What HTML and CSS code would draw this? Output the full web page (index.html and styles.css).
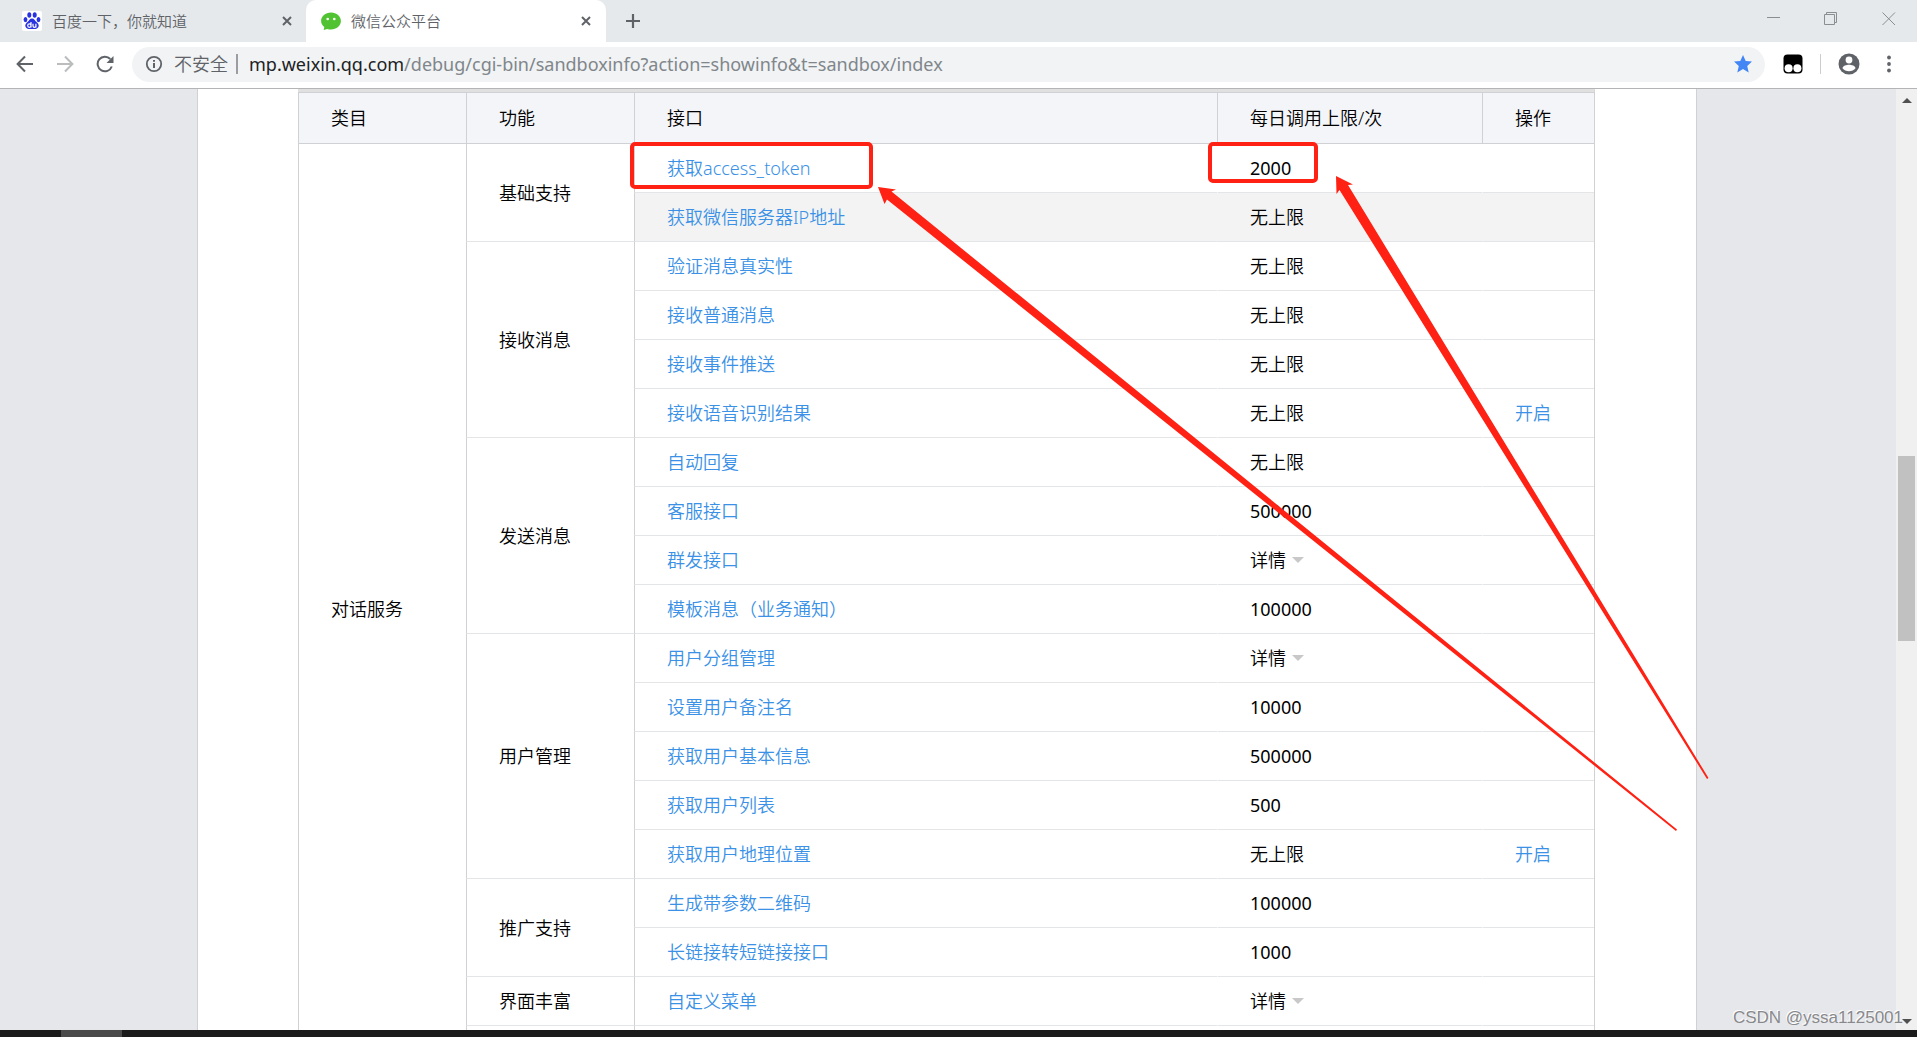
FILE: index.html
```html
<!DOCTYPE html>
<html lang="zh-CN">
<head>
<meta charset="utf-8">
<title>微信公众平台</title>
<link rel="stylesheet" href="styles.css">
</head>
<body>
<header class="tabs">
  <div class="tab">
    <svg class="favicon" viewBox="0 0 20 20"><rect width="20" height="20" rx="2" fill="#fff"/><g fill="#2932e1"><ellipse cx="7.3" cy="4" rx="2" ry="2.8"/><ellipse cx="12.7" cy="4" rx="2" ry="2.8"/><ellipse cx="3.5" cy="8.6" rx="1.9" ry="2.6"/><ellipse cx="16.5" cy="8.6" rx="1.9" ry="2.6"/><path d="M10 7.5c2.200 0 3 2.200 4.500 3.600 1.600 1.500 2.700 2.700 2 4.700-.8 2.200-2.800 2.400-6.500 2.200-3.700.2-5.700 0-6.500-2.200-.7-2 .4-3.200 2-4.700C7 9.700 7.800 7.500 10 7.500z"/></g><path d="M9 11v5.500M9 14.600c0-2.400-3.300-2.400-3.300 0s3.300 2.400 3.300 0M11 12.700v2.400c0 1.800 2.900 1.800 2.900 0v-2.400 3.800" fill="none" stroke="#fff" stroke-width="1.200"/></svg>
    <span class="tab-title">百度一下，你就知道</span>
    <button class="icon-button" aria-label="关闭标签页"><svg width="10" height="10" viewBox="0 0 10 10"><path d="M1 1l8 8M9 1l-8 8" stroke="#5f6368" stroke-width="2"/></svg></button>
  </div>
  <div class="tab tab-active">
    <svg class="favicon" viewBox="0 0 20 20"><path d="M10 1.500c5.600 0 9.900 3.700 9.900 8.500s-4.300 8.500-9.900 8.500c-1.400 0-2.600-.2-3.700-.6L2.700 19l.6-3C1.300 14.500.1 12.400.1 10 .1 5.200 4.400 1.500 10 1.500z" fill="#51c332"/><circle cx="6.700" cy="8" r="1.300" fill="#fff"/><circle cx="13.300" cy="8" r="1.300" fill="#fff"/></svg>
    <span class="tab-title">微信公众平台</span>
    <button class="icon-button" aria-label="关闭标签页"><svg width="10" height="10" viewBox="0 0 10 10"><path d="M1 1l8 8M9 1l-8 8" stroke="#5f6368" stroke-width="2"/></svg></button>
  </div>
  <button class="icon-button new-tab" aria-label="新标签页"><svg width="16" height="16" viewBox="0 0 16 16"><path d="M8 1v14M1 8h14" stroke="#5f6368" stroke-width="2.200"/></svg></button>
  <div class="window-controls">
    <button class="icon-button" aria-label="最小化"><svg width="14" height="14" viewBox="0 0 14 14"><path d="M1 5.500h13" stroke="#8b8e91"/></svg></button>
    <button class="icon-button" aria-label="还原"><svg width="14" height="14" viewBox="0 0 14 14"><path d="M.5 2.500h10v10H.5zM2.500 2.500v-2h10v10h-2" fill="none" stroke="#8b8e91"/></svg></button>
    <button class="icon-button" aria-label="关闭"><svg width="14" height="14" viewBox="0 0 14 14"><path d="M.5.500l12.500 12.500M13 .5L.5 13" stroke="#8b8e91"/></svg></button>
  </div>
</header>
<nav class="toolbar">
  <div class="nav-buttons">
    <button class="icon-button" aria-label="后退"><svg width="18" height="18" viewBox="0 0 18 18"><path d="M17 9H2M9 1.500L1.600 9 9 16.500" fill="none" stroke="#5f6368" stroke-width="2"/></svg></button>
    <button class="icon-button" aria-label="前进"><svg width="18" height="18" viewBox="0 0 18 18"><path d="M1 9h15M9 1.500L16.400 9 9 16.500" fill="none" stroke="#babcbe" stroke-width="2"/></svg></button>
    <button class="icon-button" aria-label="重新加载"><svg width="18" height="18" viewBox="0 0 18 18"><path d="M15.800 11.500A7.300 7.300 0 1 1 14.300 4" fill="none" stroke="#5f6368" stroke-width="2"/><path d="M17.500 1v7h-7z" fill="#5f6368"/></svg></button>
  </div>
  <div class="omnibox">
    <svg width="18" height="18" viewBox="0 0 18 18"><circle cx="9" cy="9" r="7.200" fill="none" stroke="#5f6368" stroke-width="1.800"/><path d="M9 8v5M9 5v1.800" stroke="#5f6368" stroke-width="2"/></svg>
    <span class="security">不安全</span>
    <span class="address"><b>mp.weixin.qq.com</b>/debug/cgi-bin/sandboxinfo?action=showinfo&amp;t=sandbox/index</span>
    <button class="icon-button" aria-label="书签"><svg width="18" height="18" viewBox="0 0 18 18"><path d="M9 0l2.700 6 6.300.6-4.800 4.300 1.500 6.600L9 14l-5.700 3.500 1.500-6.600L0 6.600 6.300 6z" fill="#4285f4"/></svg></button>
  </div>
  <div class="tools">
    <button class="icon-button" aria-label="扩展程序"><svg width="20" height="20" viewBox="0 0 20 20"><rect x=".5" y=".5" width="19" height="19" rx="4"/><circle cx="5.600" cy="14.300" r="4" fill="#fff"/><circle cx="14.400" cy="14.300" r="4" fill="#fff"/></svg></button>
    <span class="divider"></span>
    <button class="icon-button" aria-label="用户"><svg width="22" height="22" viewBox="0 0 22 22"><circle cx="11" cy="11" r="10.500" fill="#5f6368"/><circle cx="11" cy="7" r="3.400" fill="#fff"/><path d="M4.500 15.200c0-2.400 4.300-3.500 6.500-3.500s6.500 1.100 6.500 3.500c-1.500 2-3.800 3-6.500 3s-5-1-6.500-3z" fill="#fff"/></svg></button>
    <button class="icon-button menu" aria-label="菜单"><svg width="4" height="18" viewBox="0 0 4 18"><g fill="#5f6368"><circle cx="2" cy="2.500" r="1.900"/><circle cx="2" cy="9" r="1.900"/><circle cx="2" cy="15.500" r="1.900"/></g></svg></button>
  </div>
</nav>
<div class="viewport">
  <main class="page">
    <div class="sheet">
      <table class="quota">
        <colgroup><col class="col-group"><col class="col-group"><col><col class="col-limit"><col class="col-action"></colgroup>
        <thead><tr><th>类目</th><th>功能</th><th>接口</th><th>每日调用上限/次</th><th>操作</th></tr></thead>
        <tbody>
          <tr><td class="group" rowspan="19">对话服务</td><td class="group" rowspan="2">基础支持</td><td class="api"><a href="#">获取access_token</a></td><td class="count">2000</td><td></td></tr>
          <tr class="hovered"><td class="api"><a href="#">获取微信服务器IP地址</a></td><td>无上限</td><td></td></tr>
          <tr><td class="group" rowspan="4">接收消息</td><td class="api"><a href="#">验证消息真实性</a></td><td>无上限</td><td></td></tr>
          <tr><td class="api"><a href="#">接收普通消息</a></td><td>无上限</td><td></td></tr>
          <tr><td class="api"><a href="#">接收事件推送</a></td><td>无上限</td><td></td></tr>
          <tr><td class="api"><a href="#">接收语音识别结果</a></td><td>无上限</td><td><a href="#">开启</a></td></tr>
          <tr><td class="group" rowspan="4">发送消息</td><td class="api"><a href="#">自动回复</a></td><td>无上限</td><td></td></tr>
          <tr><td class="api"><a href="#">客服接口</a></td><td class="count">500000</td><td></td></tr>
          <tr><td class="api"><a href="#">群发接口</a></td><td><button class="details">详情</button></td><td></td></tr>
          <tr><td class="api"><a href="#">模板消息（业务通知）</a></td><td class="count">100000</td><td></td></tr>
          <tr><td class="group" rowspan="5">用户管理</td><td class="api"><a href="#">用户分组管理</a></td><td><button class="details">详情</button></td><td></td></tr>
          <tr><td class="api"><a href="#">设置用户备注名</a></td><td class="count">10000</td><td></td></tr>
          <tr><td class="api"><a href="#">获取用户基本信息</a></td><td class="count">500000</td><td></td></tr>
          <tr><td class="api"><a href="#">获取用户列表</a></td><td class="count">500</td><td></td></tr>
          <tr><td class="api"><a href="#">获取用户地理位置</a></td><td>无上限</td><td><a href="#">开启</a></td></tr>
          <tr><td class="group" rowspan="2">推广支持</td><td class="api"><a href="#">生成带参数二维码</a></td><td class="count">100000</td><td></td></tr>
          <tr><td class="api"><a href="#">长链接转短链接接口</a></td><td class="count">1000</td><td></td></tr>
          <tr><td class="group">界面丰富</td><td class="api"><a href="#">自定义菜单</a></td><td><button class="details">详情</button></td><td></td></tr>
          <tr><td class="group"></td><td class="api"></td><td></td><td></td></tr>
        </tbody>
      </table>
      <svg class="marks" width="1540" height="941" viewBox="197 89 1540 941">
        <g fill="none" stroke="#ff2113" stroke-width="4"><rect x="632" y="144" width="239" height="43" rx="3"/><rect x="1210" y="144" width="106" height="37" rx="3"/></g>
        <g fill="#ff2113"><path d="M878 187l18 2.500-4.500 2L1677 829.500l-1 1.500L887 199.500l-2.500 4.500z"/><path d="M1336 176l17 8.500-5 .5L1708.500 778l-1.500 1L1339.500 190l-3 4z"/></g>
      </svg>
    </div>
  </main>
  <div class="scrollbar"><span class="arrow-up"></span><span class="thumb"></span><span class="arrow-down"></span></div>
  <div class="watermark">CSDN @yssa1125001</div>
</div>
<footer class="taskbar"><span class="task"></span></footer>
</body>
</html>
```
FILE: styles.css
```css
* { box-sizing: border-box; }
body {
  margin: 0;
  height: 100vh;
  display: flex;
  flex-direction: column;
  overflow: hidden;
  font-family: "Noto Sans", "Noto Sans CJK SC", sans-serif;
  font-size: 18px;
  font-weight: 350;
  line-height: 24px;
  color: #000;
}
a { color: #3a91e6; text-decoration: none; }
svg { display: block; flex: none; }
button { font: inherit; color: inherit; padding: 0; border: 0; background: none; }
.icon-button { display: flex; align-items: center; justify-content: center; flex: none; }

.tabs { display: flex; height: 42px; flex: none; background: #e5e9ec; }
.tab { display: flex; align-items: center; width: 306px; padding: 0 14px 0 22px; color: #5f6368; font-size: 15px; }
.tab-active { width: 300px; padding-left: 15px; padding-right: 15px; background: #fff; border-radius: 10px 10px 0 0; }
.favicon { width: 20px; height: 20px; margin-right: 10px; }
.tab-title { flex: 1; }
.new-tab { width: 54px; }
.window-controls { display: flex; align-items: flex-start; gap: 44px; margin-left: auto; padding: 12px 21px 0 0; }

.toolbar { display: flex; align-items: center; height: 47px; flex: none; border-bottom: 1px solid #b4b4b6; padding: 0 26px 2px 16px; background: #fff; }
.nav-buttons { display: flex; gap: 22px; width: 116px; }
.omnibox { display: flex; align-items: center; flex: 1; height: 35px; padding: 0 13px; background: #f1f3f4; border-radius: 18px; color: #80868b; }
.security { margin-left: 11px; padding-right: 8px; border-right: 2px solid #9b9ea1; line-height: 20px; color: #5f6368; }
.address { flex: 1; margin-left: 11px; font-weight: 400; }
.address b { font-weight: inherit; color: #202124; }
.tools { display: flex; align-items: center; gap: 17px; padding-left: 18px; }
.tools .menu { width: 20px; margin-left: -6px; justify-content: flex-end; }
.divider { width: 1px; height: 20px; background: #ccc; }

.viewport { position: relative; display: flex; flex: 1; min-height: 0; background: #e6e7eb; }
.page { flex: 1; overflow: hidden; padding-right: 2px; }
.sheet { position: relative; max-width: 1500px; margin: 0 auto; padding: 0 101px 0 100px; background: #fff; border: solid #d0d1d4; border-width: 0 1px; }
.quota { width: 100%; table-layout: fixed; border-spacing: 0; border-top: 3px solid #e0e0e0; border-right: 1px solid #d0d1d4; }
.col-group { width: 168px; }
.col-limit { width: 265px; }
.col-action { width: 112px; }
th, td { padding: 0 0 0 32px; text-align: left; border-left: 1px solid transparent; }
th { height: 52px; font-weight: inherit; background: #f4f5f9; border: solid #d0d1d4; border-width: 1px 0 1px 1px; }
td { height: 49px; border-bottom: 1px solid #e4e5e7; }
.group, .api { border-left-color: #d0d1d4; }
.count { font-weight: 400; }
.hovered td:not(.group) { background-color: #f3f3f3; }
.details { display: flex; align-items: center; gap: 6px; }
.details::after { content: ""; border: solid transparent; border-width: 6px 6px 0; border-top-color: #c8c8c8; }
.marks { position: absolute; top: 0; left: -1px; pointer-events: none; }

.scrollbar { width: 21px; display: flex; flex-direction: column; align-items: center; background: #f0f0f0; padding: 9px 0 6px; }
.arrow-up, .arrow-down { border: solid transparent; }
.arrow-up { border-width: 0 5px 5px; border-bottom-color: #505050; }
.arrow-down { border-width: 5px 5px 0; border-top-color: #505050; margin-top: auto; }
.thumb { width: 17px; height: 20%; margin-top: 353px; background: #c1c1c1; }
.watermark { position: absolute; right: 14px; bottom: 0; font: 17px/24px "Liberation Sans", sans-serif; color: #88898c; text-shadow: -1px -1px #fff; }
.taskbar { display: flex; height: 7px; flex: none; padding-left: 61px; background: #1b1b1b; }
.task { width: 61px; background: #4a4a4a; }
```
